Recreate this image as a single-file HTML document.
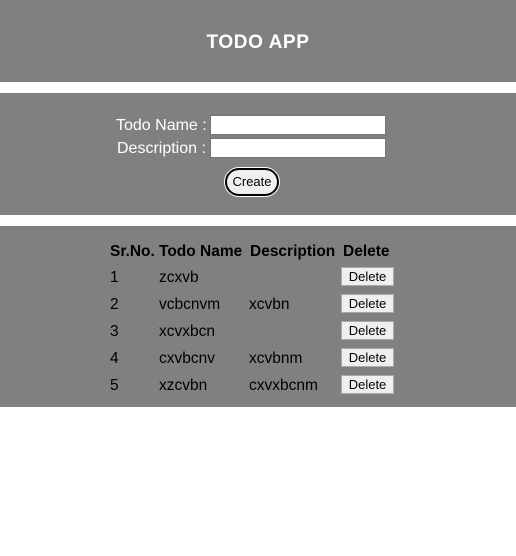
<!DOCTYPE html>
<html><head><style>
body{margin:0;width:516px;height:556px;background:#fff;font-family:"Liberation Sans",sans-serif;position:relative;overflow:hidden}
.band{position:absolute;left:0;width:516px;background:#808080}
.t{position:absolute;white-space:nowrap;font-size:15.5px;line-height:18px}
.w{color:#fff}
.inp{position:absolute;background:#fff;border:1px solid #767676;box-sizing:border-box;width:176px;height:20px;left:210px}
.btn{position:absolute;left:341px;width:53px;height:19px;background:#efefef;border:1px solid #aaa;box-sizing:border-box;font-size:13px;text-align:center;line-height:17px;color:#000}
b{font-weight:bold}
</style></head><body>
<div class="band" style="top:0;height:82px"></div>
<div class="t w" style="left:0;width:516px;text-align:center;top:32px;font-size:19px;line-height:22px;letter-spacing:0.6px"><b>TODO APP</b></div>
<div class="band" style="top:93px;height:122px"></div>
<div class="t w" style="left:116px;top:117px;font-size:16px">Todo Name :</div>
<div class="t w" style="left:117px;top:140px;font-size:16px">Description :</div>
<div class="inp" style="top:115px"></div>
<div class="inp" style="top:138px"></div>
<div style="position:absolute;left:225px;top:168px;width:54px;height:28px;border:2px solid #000;border-radius:14px;box-sizing:border-box;background:#efefef;box-shadow:0 0 0 1px #fff;font-size:13px;text-align:center;line-height:24px">Create</div>
<div class="band" style="top:226px;height:181px"></div>
<div class="t" style="left:110px;top:243px"><b>Sr.No.</b></div>
<div class="t" style="left:159px;top:243px"><b>Todo Name</b></div>
<div class="t" style="left:250px;top:243px"><b>Description</b></div>
<div class="t" style="left:343px;top:243px"><b>Delete</b></div>

<div class="t" style="left:110px;top:269px">1</div><div class="t" style="left:159px;top:269px">zcxvb</div><div class="btn" style="top:267px">Delete</div>
<div class="t" style="left:110px;top:296px">2</div><div class="t" style="left:159px;top:296px">vcbcnvm</div><div class="t" style="left:249px;top:296px">xcvbn</div><div class="btn" style="top:294px">Delete</div>
<div class="t" style="left:110px;top:323px">3</div><div class="t" style="left:159px;top:323px">xcvxbcn</div><div class="btn" style="top:321px">Delete</div>
<div class="t" style="left:110px;top:350px">4</div><div class="t" style="left:159px;top:350px">cxvbcnv</div><div class="t" style="left:249px;top:350px">xcvbnm</div><div class="btn" style="top:348px">Delete</div>
<div class="t" style="left:110px;top:377px">5</div><div class="t" style="left:159px;top:377px">xzcvbn</div><div class="t" style="left:249px;top:377px">cxvxbcnm</div><div class="btn" style="top:375px">Delete</div>
</body></html>
